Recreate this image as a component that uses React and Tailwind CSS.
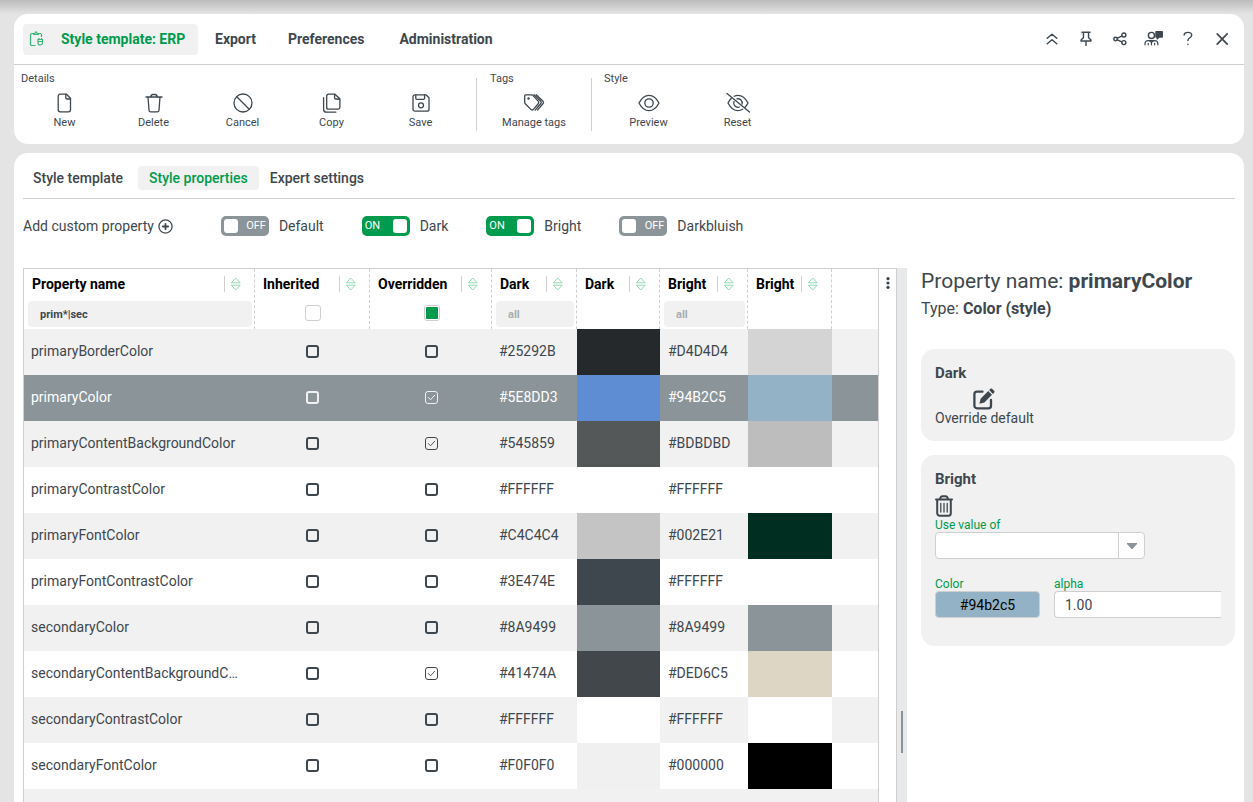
import { Fragment, useState } from 'react';
import clsx from 'clsx';

const Svg = ({ size = 20, width = 1.3, className, children }) => (
    <svg width={size} height={size} viewBox="0 0 20 20" fill="none" stroke="currentColor" strokeWidth={width} strokeLinecap="round" strokeLinejoin="round" className={className} aria-hidden="true">
        {children}
    </svg>
);

const icons = {
    file: <><path d="M4.7 1.2h6.8l4 4v11.6a2 2 0 0 1-2 2H5.2a2 2 0 0 1-2-2V3.2a2 2 0 0 1 1.5-2z" /><path d="M10.8 1.5v3.2c0 .8.5 1.3 1.3 1.3h3.2" /></>,
    trash: <><path d="M2 4h16M4 4l1 13.2a1.7 1.7 0 0 0 1.7 1.6h6.6a1.7 1.7 0 0 0 1.7-1.6L16 4" /><path d="M6.8 3.8c.2-1.7 1-2.3 2-2.3h2.4c1 0 1.8.6 2 2.3" /></>,
    ban: <><circle cx="10" cy="10" r="9" /><path d="M3.8 3.8l12.4 12.4" /></>,
    copy: <><path d="M6.7 1.2h6.2l5 4.6v8.4a2 2 0 0 1-2 2H6.7a2 2 0 0 1-2-2v-11a2 2 0 0 1 2-2z" /><path d="M12.6 1.5v3.2c0 .8.5 1.3 1.3 1.3h3.6M1.6 4.6v11.9a2.7 2.7 0 0 0 2.7 2.7h9.5" /></>,
    save: <><path d="M4 1.8h11l3 3v11.4a2 2 0 0 1-2 2H4a2 2 0 0 1-2-2V3.8a2 2 0 0 1 2-2z" /><path d="M4.8 2v3.2c0 .7.4 1.1 1.1 1.1h6.6c.7 0 1.1-.4 1.1-1.1V2" /><circle cx="10" cy="12.3" r="2.5" /></>,
    tags: <><path d="M1.800 1.800h5.700c.5 0 .9.200 1.300.6l5.400 5.700c.8.900.8 1.700 0 2.600l-4.800 5.600c-.8.900-1.700.9-2.500.1L1.300 10.700c-.4-.4-.6-.9-.6-1.400V2.900c0-.7.4-1.100 1.100-1.100z" /><path d="M10 1.800l6.700 6.500c.7.700.7 1.500.1 2.200l-5.600 6.600M12.300 1.800l6.700 6.500c.7.700.7 1.500.1 2.200l-5.600 6.600" /><circle cx="4.500" cy="5.500" r=".6" fill="currentColor" /></>,
    eye: <><path d="M0 10C2.600 5 6 2.300 10 2.300S17.400 5 20 10c-2.600 5-6 7.700-10 7.700S2.600 15 0 10z" /><circle cx="10" cy="10" r="4.200" /></>,
    eyeOff: <><path d="M3.300 5.200C2.100 6.400 1 8 0 10c2.600 5 6 7.700 10 7.700 1.700 0 3.200-.5 4.700-1.400M6.200 3.300c1.200-.7 2.500-1 3.800-1 4 0 7.400 2.700 10 7.700-.9 1.700-1.900 3.200-3 4.300" /><path d="M6 8.600a4.200 4.200 0 0 0 5.400 5.400M9 5.900a4.200 4.200 0 0 1 5.100 5M-1 .5l22.500 18.500" /></>,
};

const actionGroups = [
    { title: 'Details', titlePad: 'pl-[7px]', rowPad: 'pl-1.5 pr-[11px]', actions: [['New', 'file'], ['Delete', 'trash'], ['Cancel', 'ban'], ['Copy', 'copy'], ['Save', 'save']] },
    { title: 'Tags', titlePad: 'pl-[13px]', rowPad: 'px-1.5', actions: [['Manage tags', 'tags']] },
    { title: 'Style', titlePad: 'pl-3', rowPad: 'pl-3', actions: [['Preview', 'eye'], ['Reset', 'eyeOff']] },
];

const windowButtons = [
    { label: 'Collapse', icon: <path d="M4 9l6-5 6 5M4 16l6-5 6 5" /> },
    { label: 'Pin', icon: <path d="M5 1.500h10M6.800 1.500v7l-3 2.700v1.300h12.400v-1.300l-3-2.700v-7M10 12.500v5.500" /> },
    { label: 'Share', icon: <><circle cx="4.500" cy="10" r="2.200" /><circle cx="14.800" cy="5" r="2.500" /><circle cx="14.800" cy="14.500" r="2.500" /><path d="M6.700 9l5.500-2.700M6.700 11l5.500 2.500" /></> },
    { label: 'Support', icon: <><circle cx="6.800" cy="5.500" r="3.800" /><path d="M-1.200 17.300v-1.600c0-2.300 2-3.700 4.200-3.700h7.600c2.200 0 4.200 1.400 4.200 3.700v1.600M2.800 17.300v-1.800M6.800 17.300v-2.800M10.800 17.300v-1.800M4 12.300l2.800 1.900 2.800-1.900" strokeWidth="1.500" /><path d="M12.500 1h7.800v6.500h-3.800l-2.400 2.300V7.500h-1.600z" fill="currentColor" /></> },
    { label: 'Help', icon: <><path d="M5.200 5c.2-2 2-3.300 4.700-3.300 2.800 0 4.700 1.400 4.700 3.600 0 3.300-4.700 3-4.700 6.600" /><path d="M9.900 16.400v.4" /></> },
    { label: 'Close', icon: <path d="M4 3.500l12.500 13M16.500 3.500L4 16.500" strokeWidth="2.100" /> },
];

const toggles = [
    { label: 'Default', on: false },
    { label: 'Dark', on: true },
    { label: 'Bright', on: true },
    { label: 'Darkbluish', on: false },
];

const columns = [
    { title: 'Property name', width: 'w-[231px]', filter: 'text', value: 'prim*|sec' },
    { title: 'Inherited', width: 'w-[115px]', filter: 'empty' },
    { title: 'Overridden', width: 'w-[122px]', filter: 'checked' },
    { title: 'Dark', width: 'w-[85px]', filter: 'text' },
    { title: 'Dark', width: 'w-[83px]' },
    { title: 'Bright', width: 'w-[88px]', filter: 'text' },
    { title: 'Bright', width: 'w-[84px]' },
];

const rows = [
    { name: 'primaryBorderColor', dark: '#25292B', bright: '#D4D4D4' },
    { name: 'primaryColor', overridden: true, dark: '#5E8DD3', bright: '#94B2C5' },
    { name: 'primaryContentBackgroundColor', overridden: true, dark: '#545859', bright: '#BDBDBD' },
    { name: 'primaryContrastColor', dark: '#FFFFFF', bright: '#FFFFFF' },
    { name: 'primaryFontColor', dark: '#C4C4C4', bright: '#002E21' },
    { name: 'primaryFontContrastColor', dark: '#3E474E', bright: '#FFFFFF' },
    { name: 'secondaryColor', dark: '#8A9499', bright: '#8A9499' },
    { name: 'secondaryContentBackgroundColor', overridden: true, dark: '#41474A', bright: '#DED6C5' },
    { name: 'secondaryContrastColor', dark: '#FFFFFF', bright: '#FFFFFF' },
    { name: 'secondaryFontColor', dark: '#F0F0F0', bright: '#000000' },
];

const Toggle = ({ label, on }) => {
    const [checked, setChecked] = useState(on);
    return (
        <label className="flex items-center gap-2.5">
            <span className="grid items-center">
                <input type="checkbox" role="switch" checked={checked} onChange={() => setChecked(!checked)} className="[grid-area:1/1] appearance-none w-12 h-5 rounded-[5px] bg-[#8a9499] checked:bg-[#009b4d]" />
                <span className={clsx('[grid-area:1/1] pointer-events-none flex items-center justify-between px-[3px] text-[11px] text-white', checked && 'flex-row-reverse')}>
                    <span className="size-3.5 rounded-[3px] bg-white"></span>
                    <span>{checked ? 'ON' : 'OFF'}</span>
                </span>
            </span>
            {label}
        </label>
    );
};

const Check = ({ label, checked = false, selected }) => (
    <span className="grid place-items-center">
        <input type="checkbox" aria-label={label} defaultChecked={checked} className={clsx('peer [grid-area:1/1] appearance-none size-[13px] rounded-[3px] border-2 checked:border', selected ? 'border-[#f1f1f1]' : 'border-[#3e474e]')} />
        <Svg size={9} width={2} className="[grid-area:1/1] pointer-events-none invisible peer-checked:visible"><path d="M3 10l5 5 9-10" /></Svg>
    </span>
);

const HeaderCell = ({ title, filter, value }) => (
    <th scope="col" className="h-[60px] p-0 align-top font-bold text-left border-r border-dashed border-[#cfcfcf]">
        <div className="flex items-center h-[30px] pl-2">
            <span className="flex-1 whitespace-nowrap">{title}</span>
            <span className="w-px h-4 bg-[#cfcfcf]"></span>
            <button type="button" aria-label={`Sort by ${title}`} className="ml-[5px] mr-3 text-[#8fd6b0]">
                <Svg size={12} width={1.6} className="overflow-visible"><path d="M10 .5l7 7.500H3zM10 19.500l7-7.500H3z" /></Svg>
            </button>
        </div>
        <div className="flex justify-center items-center h-[28px] pl-1 pr-0.5">
            {filter === 'text' && <input type="text" aria-label={`Filter ${title}`} defaultValue={value} placeholder="all" className="w-full min-w-0 h-[26px] mt-0.5 pl-3 rounded-[4px] bg-[#f1f1f1] text-[11px] font-bold text-[#3e474e] placeholder:text-[#a8adb0]" />}
            {filter === 'empty' && <input type="checkbox" aria-label={`Filter ${title}`} className="appearance-none size-4 rounded-[3px] border border-[#cfcfcf] bg-white" />}
            {filter === 'checked' && <input type="checkbox" defaultChecked aria-label={`Filter ${title}`} className="appearance-none size-4 rounded-[3px] border border-[#cfcfcf] bg-white checked:bg-[#009b4d] checked:bg-clip-content checked:p-px" />}
        </div>
    </th>
);

const PropertyTable = () => {
    const [selected, setSelected] = useState('primaryColor');
    return (
        <table className="w-full table-fixed border-separate border-spacing-0 text-[14px]">
            <colgroup>
                {columns.map((column, index) => <col key={index} className={column.width} />)}
                <col />
            </colgroup>
            <thead className="text-black">
                <tr>
                    {columns.map((column, index) => <HeaderCell key={index} {...column} />)}
                    <td></td>
                </tr>
            </thead>
            <tbody>
                {rows.map((row) => (
                    <tr key={row.name} onClick={() => setSelected(row.name)} className={clsx('h-[46px]', row.name === selected ? 'bg-[#8a9499] text-white' : 'odd:bg-[#f1f1f1]')}>
                        <td className="pl-[7px] pr-4 pt-0 pb-0.5 truncate">{row.name}</td>
                        <td className="pt-0 px-0 pb-0.5"><Check label="Inherited" selected={row.name === selected} /></td>
                        <td className="pt-0 px-0 pb-0.5"><Check label="Overridden" checked={row.overridden} selected={row.name === selected} /></td>
                        <td className="pl-[7px] pt-0 pb-0.5">{row.dark}</td>
                        <td style={{ backgroundColor: row.dark }}></td>
                        <td className="pl-2 pt-0 pb-0.5">{row.bright}</td>
                        <td style={{ backgroundColor: row.bright }}></td>
                        <td></td>
                    </tr>
                ))}
                <tr className="h-[46px] odd:bg-[#f1f1f1]"><td colSpan={8}></td></tr>
            </tbody>
        </table>
    );
};

const Details = () => (
    <aside className="w-[337px] shrink-0 pl-3.5 pr-[9px]">
        <h2 className="h-[26px] text-[21px] leading-[26px]">Property name: <b>primaryColor</b></h2>
        <p className="mt-1 text-[16px] leading-[22px]">Type: <b>Color (style)</b></p>

        <section className="mt-[29px] h-[92px] px-3.5 pt-3 rounded-[14px] bg-[#f1f1f1]">
            <h3 className="text-[15px] leading-6 font-bold">Dark</h3>
            <button type="button" className="mt-[3px] flex flex-col items-center text-[14px] leading-4">
                <svg width="22" height="22" viewBox="0 0 22 22" aria-hidden="true">
                    <path d="M9.500 3.700H4a2.600 2.600 0 0 0-2.600 2.600v11.400A2.600 2.600 0 0 0 4 20.300h11.400a2.600 2.600 0 0 0 2.600-2.600V12" fill="none" stroke="currentColor" strokeWidth="2.300" strokeLinecap="round" />
                    <path d="M15.200 3l3.800 3.800-7.600 7.600-5 1.400 1.200-5zM16.100 2.100l1.200-1.200c.6-.6 1.400-.6 2 0l1.800 1.800c.6.6.6 1.400 0 2l-1.200 1.200z" fill="currentColor" />
                </svg>
                Override default
            </button>
        </section>

        <section className="mt-3.5 h-[191px] px-3.5 pt-3 rounded-[14px] bg-[#f1f1f1] text-[12px]">
            <h3 className="text-[15px] leading-6 font-bold">Bright</h3>
            <button type="button" aria-label="Remove override" className="block mt-1 h-[22px]">
                <svg width="18" height="22" viewBox="0 0 18 22" fill="none" stroke="currentColor" strokeWidth="2" strokeLinecap="round" aria-hidden="true">
                    <path d="M1 4.500h16M2.200 4.500v13.700A2.500 2.500 0 0 0 4.700 20.700h8.600a2.500 2.500 0 0 0 2.500-2.500V4.500M5 4.300C5.300 2 6.200 1.200 7.500 1.200h3c1.300 0 2.200.8 2.500 3.100" />
                    <path d="M5.800 8.500v8.500M9 8.500v8.500M12.200 8.500v8.500" strokeWidth="1.300" />
                </svg>
            </button>
            <label htmlFor="use-value" className="block mt-px leading-[14px] text-[#009b4d]">Use value of</label>
            <div className="grid w-[210px]">
                <select id="use-value" className="[grid-area:1/1] appearance-none h-[27px] rounded-[4px] border border-[#cfcfcf] bg-white px-2">
                    <option value=""></option>
                </select>
                <span className="[grid-area:1/1] justify-self-end pointer-events-none flex items-center justify-center w-[27px] my-px border-l border-[#cfcfcf] text-[#8a9499]">
                    <svg width="10" height="6" viewBox="0 0 10 6" aria-hidden="true"><path d="M0 0h10v1L5.500 6h-1L0 1z" fill="currentColor" /></svg>
                </span>
            </div>
            <div className="flex gap-3.5 mt-[18px]">
                <div className="w-[105px]">
                    <label htmlFor="color" className="block leading-[14px] text-[#009b4d]">Color</label>
                    <input id="color" type="text" defaultValue="#94b2c5" className="w-full h-[27px] rounded-[4px] border border-[#cfcfcf] bg-[#94b2c5] text-center text-[14px] text-black" />
                </div>
                <div className="flex-1 min-w-0">
                    <label htmlFor="alpha" className="block leading-[14px] text-[#009b4d]">alpha</label>
                    <input id="alpha" type="text" defaultValue="1.00" className="w-full h-[27px] pl-2.5 rounded-l-[4px] border border-r-0 border-[#cfcfcf] bg-white text-[14px]" />
                </div>
            </div>
        </section>
    </aside>
);

export default function App() {
    return (
        <div className="flex flex-col h-screen overflow-hidden bg-[#e4e4e4] font-[Roboto,sans-serif] text-[14px] text-[#3e474e]">
            <div className="h-3.5 shrink-0 bg-linear-to-b from-[#bcbcbc] to-[#e4e4e4]"></div>

            <header className="shrink-0 h-[130px] ml-3.5 mr-[9px] rounded-[14px] bg-white">
                <div className="flex items-center h-[51px] px-[9px] border-b border-[#cfcfcf]">
                    <nav className="flex items-center flex-1 font-bold text-[14px]">
                        <a href="#style-template" className="flex items-center h-[31px] w-[175px] pl-1.5 rounded-[4px] bg-[#f1f1f1] text-[#009b4d]">
                            <svg width="16" height="16" viewBox="0 0 16 16" fill="none" stroke="#3bb577" strokeWidth="1.200" aria-hidden="true" className="mr-4">
                                <path d="M4 2.500H2.800A1.300 1.300 0 0 0 1.500 3.800v9.400a1.300 1.300 0 0 0 1.300 1.300H6.500M10 2.500h1.200a1.300 1.300 0 0 1 1.300 1.300V6M4.500 3.500v-1L6 2.300 6.300 1h1.400L8 2.300l1.500.2v1z" />
                                <path d="M9 8.500h4.500v3.300A2.200 2.200 0 0 1 11.200 14 2.200 2.200 0 0 1 9 11.800zM8.500 10.500h5.500M10 8.500V7M12.500 8.500V7" />
                            </svg>
                            Style template: ERP
                        </a>
                        <a href="#export" className="ml-[17px]">Export</a>
                        <a href="#preferences" className="ml-8">Preferences</a>
                        <a href="#administration" className="ml-[35px]">Administration</a>
                    </nav>
                    <div className="flex gap-[18px] pr-[5px]">
                        {windowButtons.map((button) => (
                            <button key={button.label} type="button" aria-label={button.label} className="w-4 h-4">
                                <Svg size={16} width={1.8} className="overflow-visible">{button.icon}</Svg>
                            </button>
                        ))}
                    </div>
                </div>
                <div className="flex pt-[7px] text-[11px]">
                    {actionGroups.map((group, index) => (
                        <Fragment key={group.title}>
                            {index > 0 && <div className="w-px h-[53px] mt-1.5 bg-[#cfcfcf]"></div>}
                            <section>
                                <h2 className={clsx('leading-[14px]', group.titlePad)}>{group.title}</h2>
                                <div className={clsx('flex', group.rowPad)}>
                                    {group.actions.map(([label, icon]) => (
                                        <button key={label} type="button" className={clsx('flex flex-col items-center pt-[7px] leading-4', label === 'Manage tags' ? 'w-[102px]' : 'w-[89px]')}>
                                            <Svg className="mb-0.5 overflow-visible">{icons[icon]}</Svg>
                                            {label}
                                        </button>
                                    ))}
                                </div>
                            </section>
                        </Fragment>
                    ))}
                </div>
            </header>

            <main className="flex flex-col flex-1 min-h-0 mt-[9px] ml-3.5 mr-[9px] pl-[9px] rounded-t-[14px] bg-white overflow-hidden">
                <nav className="flex items-center h-[46px] shrink-0 mr-[9px] pt-[5px] border-b border-[#cfcfcf] font-medium text-[14px]">
                    <a href="#template" className="pl-2.5 pr-[15px]">Style template</a>
                    <a href="#properties" className="px-[11px] h-6 leading-6 rounded-[4px] bg-[#f1f1f1] text-[#009b4d]">Style properties</a>
                    <a href="#expert" className="px-[11px]">Expert settings</a>
                </nav>
                <div className="flex items-center gap-[38px] h-[54px] shrink-0">
                    <button type="button" className="flex items-center gap-1 mr-2.5">
                        Add custom property
                        <Svg size={15} width={1.7}><circle cx="10" cy="10" r="8.800" /><path d="M10 6.500v7M6.500 10h7" strokeWidth="2.400" /></Svg>
                    </button>
                    {toggles.map((toggle) => <Toggle key={toggle.label} {...toggle} />)}
                </div>
                <div className="flex flex-1 min-h-0 mt-[15px]">
                    <div className="flex flex-1 min-w-0 border-t border-x border-[#cfcfcf]">
                        <div className="flex-1 min-w-0">
                            <PropertyTable />
                        </div>
                        <div className="w-[18px] border-l border-[#cfcfcf]">
                            <button type="button" aria-label="Table menu" className="block mx-auto mt-2">
                                <svg width="4" height="12" viewBox="0 0 4 12" fill="currentColor" aria-hidden="true"><circle cx="2" cy="1.700" r="1.600" /><circle cx="2" cy="6" r="1.600" /><circle cx="2" cy="10.300" r="1.600" /></svg>
                            </button>
                        </div>
                    </div>
                    <div className="w-2.5 bg-[#e7e9ea] cursor-col-resize">
                        <div className="w-0.5 h-[42px] mx-auto mt-[443px] bg-[#8a9499]"></div>
                    </div>
                    <Details />
                </div>
            </main>
        </div>
    );
}
